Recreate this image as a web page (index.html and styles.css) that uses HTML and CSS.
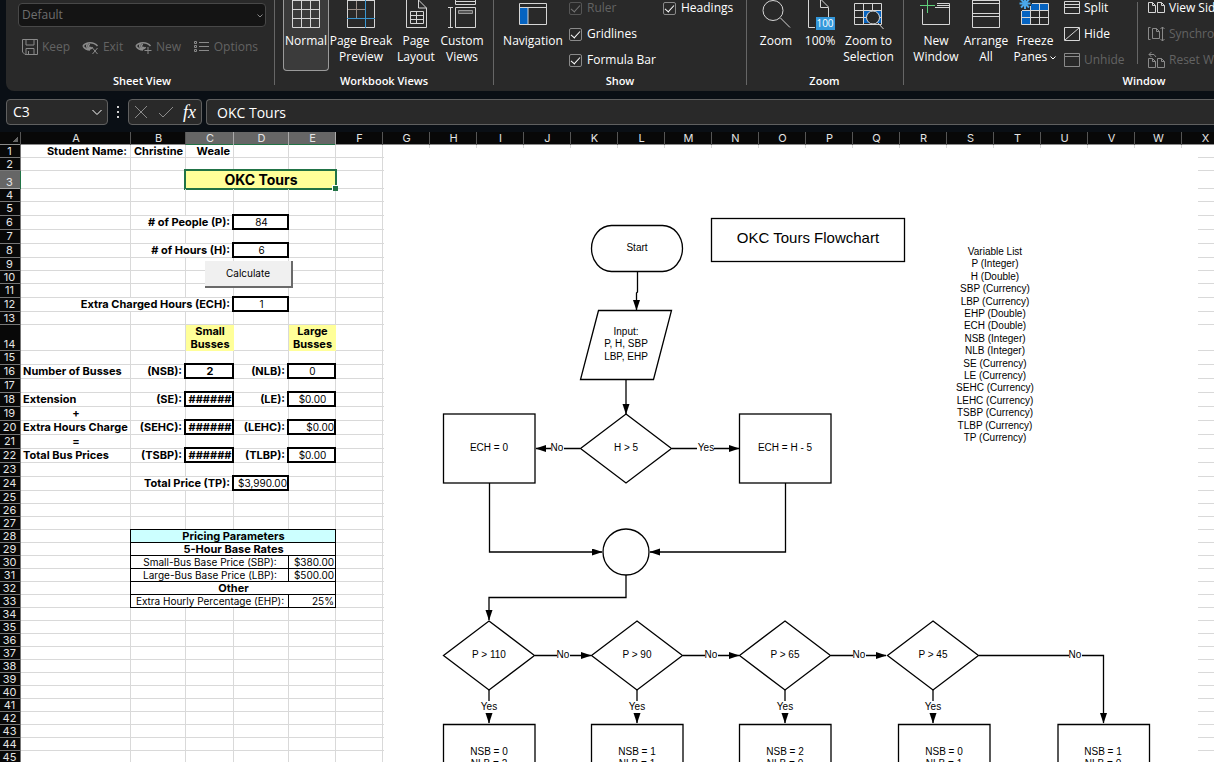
FILE: index.html
```html
<!DOCTYPE html>
<html lang="en">
<head>
<meta charset="utf-8">
<title>OKC Tours</title>
<link rel="stylesheet" href="styles.css">
</head>
<body>
<header class="ribbon">
  <section class="group group-sheet">
    <div class="sheet-tools">
      <select class="view-select" aria-label="Sheet view" disabled><option>Default</option></select>
      <svg class="select-caret" width="8" height="6" viewBox="0 0 8 6"><path d="M1.500 1.500L4 4l2.500-2.500"/></svg>
      <div class="tool-row">
        <button class="tool" disabled><svg width="16" height="16" viewBox="0 0 16 16"><path d="M.5.5h15v15H3L.5 13zM4 .5v5.500h8V.5M4 15.500V9.500h8v6M6.500 15v-3"/></svg>Keep</button>
        <button class="tool" disabled><svg width="17" height="16" viewBox="0 0 17 16"><path d="M1 7C4 2.500 12 2.500 15.500 7M1 7c2 3 4.500 4 7 4M6 4.500a3 3 0 1 0 4.500 3.500M8 5.500a1.500 1.500 0 1 0 1 2.500" stroke-width="1.500"/><path d="M10.500 9l5 6M15.500 9l-5 6"/></svg>Exit</button>
        <button class="tool" disabled><svg width="17" height="16" viewBox="0 0 17 16"><path d="M1 7C4 2.500 12 2.500 15.500 7M1 7c2 3 4.500 4 7 4M6 4.500a3 3 0 1 0 4.500 3.500M8 5.500a1.500 1.500 0 1 0 1 2.500" stroke-width="1.500"/><path d="M13 8v7M9.500 11.500h7"/></svg>New</button>
        <button class="tool" disabled><svg width="17" height="16" viewBox="0 0 17 16"><path d="M1.500 2.500h2v2h-2zM1.500 6.500h2v2h-2zM1.500 10.500h2v2h-2zM6 3.500h10M6 7.500h10M6 11.500h10"/></svg>Options</button>
      </div>
    </div>
    <h2>Sheet View</h2>
  </section>

  <section class="group group-views">
    <div class="bar">
      <button class="big w46 active"><svg width="28" height="28" viewBox="0 0 28 28"><path d="M.5-2v29.500h27V-2M9.500-2v29M18.500-2v29M.500 0.500h27M.5 9.500h27M.5 18.500h27"/></svg>Normal</button>
      <button class="big w64"><svg width="28" height="28" viewBox="0 0 28 28"><path d="M.5-2v29.500h27V-2M.5.5h27"/><path class="dim" d="M9.500 1v17M1 9.500h17"/><path class="blue" d="M18.500 0v28M0 18.500h28"/></svg>Page Break<br>Preview</button>
      <button class="big w46"><svg width="28" height="28" viewBox="0 0 28 28"><path d="M4.500-2v29.500h20V8L16.500 0M16.500-1v9h8M8.500 11.500h13v12h-13zM8.500 15.500h13M8.500 19.500h13M14.500 11.500v12"/></svg>Page<br>Layout</button>
      <button class="big w46"><svg width="28" height="28" viewBox="0 0 28 28"><path d="M7.500-1v5.500h20V-1M7.500 1.500h20M7.500 7.500h20v20h-20zM2.500 7v20M0 7.500h5M0 27.500h5"/><path class="slot" d="M10.500 10.500h14v3h-14z"/></svg>Custom<br>Views</button>
    </div>
    <h2>Workbook Views</h2>
  </section>

  <section class="group group-show">
    <div class="bar">
      <button class="big w62"><svg width="28" height="28" viewBox="0 0 28 28"><path class="fill" d="M1 8h8v16H1z"/><path d="M.5 3.500h27v21H.5zM.5 7.500h27M9 8v16"/></svg>Navigation</button>
      <div class="checks">
        <label class="off"><input type="checkbox" checked disabled>Ruler</label>
        <label><input type="checkbox" checked>Headings</label>
        <label><input type="checkbox" checked>Gridlines</label>
        <label class="wide"><input type="checkbox" checked>Formula Bar</label>
      </div>
    </div>
    <h2>Show</h2>
  </section>

  <section class="group group-zoom">
    <div class="bar">
      <button class="big w45"><svg width="30" height="28" viewBox="0 0 30 28"><circle cx="12" cy="10.500" r="10"/><path d="M19.500 18l9.500 9.500"/></svg>Zoom</button>
      <button class="big w45"><svg width="28" height="28" viewBox="0 0 28 28"><path d="M9 27.500H2.500V-2M14.500-2v9.500h8V17M14.500-1l8 8"/><path class="badge" d="M10 17h19v13H10z"/><text class="badge-text" x="19" y="27">100</text></svg>100%</button>
      <button class="big w54"><svg width="30" height="28" viewBox="0 0 30 28"><path class="fill" d="M10 11h17v12H10z"/><path d="M.5 3.500h27v21H.5zM9.500 4v20M18.500 4v20M1 10.500h27M1 17.500h27"/><circle class="lens" cx="19" cy="17.500" r="6.500"/><path d="M23.500 22.500l6 6.500"/></svg>Zoom to<br>Selection</button>
    </div>
    <h2>Zoom</h2>
  </section>

  <section class="group group-window">
    <div class="bar">
      <button class="big w50"><svg width="30" height="28" viewBox="0 0 30 28"><path d="M1.500 9v15.500h27v-21H16M14 7.500h14M16 5.500h12"/><path class="green" d="M6.500-2v15M-1 5.500h15"/></svg>New<br>Window</button>
      <button class="big w50"><svg width="28" height="28" viewBox="0 0 28 28"><path d="M.5-2v29.500h27V-2M.5.5h27M.5 3.500h27M.5 13.500h27M.5 16.500h27"/></svg>Arrange<br>All</button>
      <button class="big w48"><svg width="30" height="28" viewBox="0 0 30 28"><path class="fill" d="M11 4h17v6H11zM2 10h8v14H2z"/><path d="M1.500 11v13.500h27v-21H12M10.500 6v18M19.500 4v20M2 10.500h27M2 17.500h27"/><path class="sky" d="M5-2v11M-.5 3.500h11M1-.5l8 8M9-.5l-8 8"/></svg><span>Freeze<br>Panes <svg class="caret" width="6" height="4" viewBox="0 0 6 4"><path d="M.5.5L3 3 5.500.5"/></svg></span></button>
      <div class="small-list">
        <button class="tool lit"><svg width="16" height="16" viewBox="0 0 16 16"><path d="M.5 1.500h15v12H.5zM.5 4.500h15M.5 7.500h15"/></svg>Split</button>
        <button class="tool lit"><svg width="16" height="16" viewBox="0 0 16 16"><path d="M.5 1.500h15v13H.5zM1 14L15 2"/></svg>Hide</button>
        <button class="tool" disabled><svg width="16" height="16" viewBox="0 0 16 16"><path d="M.5 1.500h15v13H.5zM.5 4.500h15"/></svg>Unhide</button>
      </div>
      <div class="small-list side-list">
        <button class="tool lit"><svg width="17" height="16" viewBox="0 0 17 16"><path d="M.5 2.500h4l3 3v7h-7zM4.500 2.500v3h3M9.500 2.500h4l3 3v7h-7zM13.500 2.500v3h3"/></svg>View Side by Side</button>
        <button class="tool" disabled><svg width="17" height="16" viewBox="0 0 17 16"><path d="M2.500 1.500h-2v12h2M4.500 2.500h4l3 3v7h-7zM8.500 2.500v3h3M14.500 1v14M12.500 3l2-2 2 2M12.500 13l2 2 2-2"/></svg>Synchronous Scrolling</button>
        <button class="tool" disabled><svg width="17" height="16" viewBox="0 0 17 16"><path d="M.5 6.500h4l3 3v6h-7zM4.500 6.500v3h3M9.500 6.500h4l3 3v6h-7zM13.500 6.500v3h3M1 2.500h5l2 2.500M3.500 0L1 2.500 3.500 5"/></svg>Reset Window Position</button>
      </div>
    </div>
    <h2>Window</h2>
  </section>
</header>

<div class="formula-bar">
  <div class="name-box">
    <input type="text" aria-label="Name box" value="C3">
    <button aria-label="Open name list"><svg width="12" height="12" viewBox="0 0 12 12"><path d="M1.500 4L6 8.500 10.500 4"/></svg></button>
  </div>
  <div class="grip"><span></span><span></span><span></span></div>
  <div class="entry">
    <button aria-label="Cancel"><svg width="14" height="14" viewBox="0 0 14 14"><path d="M1 1l12 12M13 1L1 13"/></svg></button>
    <button aria-label="Enter"><svg width="16" height="14" viewBox="0 0 16 14"><path d="M1 8l4 4L15 2"/></svg></button>
    <button class="fx" aria-label="Insert function">fx</button>
  </div>
  <input class="formula" type="text" aria-label="Formula" value="OKC Tours">
</div>

<main class="sheet">
  <table class="grid">
    <colgroup id="cols"></colgroup>
    <thead><tr id="letters"></tr></thead>
    <tbody id="rows"></tbody>
  </table>
  <button class="calc">Calculate</button>
  <svg class="chart" width="814" height="640" viewBox="384 148 814 640">
    <defs>
      <marker id="tip" markerUnits="userSpaceOnUse" markerWidth="11" markerHeight="8" refX="10" refY="3.500" orient="auto"><path class="tip" d="M0 0L10.500 3.500 0 7z"/></marker>
    </defs>
    <g class="shape">
      <rect x="591.500" y="225.500" width="91" height="46" rx="20" ry="23"/>
      <rect x="711.500" y="218.500" width="193" height="43"/>
      <path d="M598.500 310.500h73l-18 69h-73z"/>
      <path d="M626 414l45.500 34.500L626 483l-45.500-34.500z"/>
      <rect x="443.500" y="414" width="91.500" height="69"/>
      <rect x="739.500" y="414" width="91.500" height="69"/>
      <circle cx="626" cy="552" r="23"/>
      <path d="M489 621l45.500 34.500L489 690l-45.500-34.500zM637 621l45.500 34.500L637 690l-45.500-34.500zM785 621l45.500 34.500L785 690l-45.500-34.500zM933 621l45.500 34.500L933 690l-45.500-34.500z"/>
      <path d="M443.500 764v-39.500H535V764M591.500 764v-39.500H683V764M739.500 764v-39.500H831V764M898.500 764v-39.500H990V764M1058 764v-39.500h91.500V764"/>
    </g>
    <g class="link">
      <path d="M637.500 272v20l-1 1v17"/>
      <path d="M626 380v34"/>
      <path d="M580 448.500h-44"/>
      <path d="M672 448.500h67"/>
      <path d="M489.500 483v69H602"/>
      <path d="M785.500 483v69H650"/>
      <path d="M626 575v22.500H489V620"/>
      <path d="M535 655.500h56"/>
      <path d="M683 655.500h56"/>
      <path d="M831 655.500h55"/>
      <path d="M979 655.500h124.500V723"/>
      <path d="M489 690v33"/>
      <path d="M637 690v33"/>
      <path d="M785 690v33"/>
      <path d="M933 690v33"/>
    </g>
    <g class="gap">
      <rect x="551" y="444" width="13" height="9"/><rect x="697" y="444" width="17" height="9"/>
      <rect x="557" y="651" width="13" height="9"/><rect x="705" y="651" width="13" height="9"/>
      <rect x="853" y="651" width="13" height="9"/><rect x="1069" y="651" width="13" height="9"/>
      <rect x="481" y="701" width="17" height="12"/><rect x="629" y="701" width="17" height="12"/>
      <rect x="777" y="701" width="17" height="12"/><rect x="925" y="701" width="17" height="12"/>
    </g>
    <g class="words">
      <text class="title" x="808" y="243">OKC Tours Flowchart</text>
      <text x="637" y="251">Start</text>
      <text x="626" y="335">Input:</text><text x="626" y="347">P, H, SBP</text><text x="626" y="360">LBP, EHP</text>
      <text x="626" y="451">H &gt; 5</text>
      <text x="489" y="451">ECH = 0</text><text x="785" y="451">ECH = H - 5</text>
      <text x="557" y="451">No</text><text x="706" y="451">Yes</text>
      <text x="489" y="658">P &gt; 110</text><text x="637" y="658">P &gt; 90</text><text x="785" y="658">P &gt; 65</text><text x="933" y="658">P &gt; 45</text>
      <text x="563" y="658">No</text><text x="711" y="658">No</text><text x="859" y="658">No</text><text x="1075" y="658">No</text>
      <text x="489" y="710">Yes</text><text x="637" y="710">Yes</text><text x="785" y="710">Yes</text><text x="933" y="710">Yes</text>
      <text x="489" y="755">NSB = 0</text><text x="637" y="755">NSB = 1</text><text x="785" y="755">NSB = 2</text><text x="944" y="755">NSB = 0</text><text x="1103" y="755">NSB = 1</text>
      <text x="489" y="767">NLB = 2</text><text x="637" y="767">NLB = 1</text><text x="785" y="767">NLB = 0</text><text x="944" y="767">NLB = 1</text><text x="1103" y="767">NLB = 0</text>
      <text x="995" y="255">Variable List</text>
      <text x="995" y="267">P (Integer)</text>
      <text x="995" y="280">H (Double)</text>
      <text x="995" y="292">SBP (Currency)</text>
      <text x="995" y="305">LBP (Currency)</text>
      <text x="995" y="317">EHP (Double)</text>
      <text x="995" y="329">ECH (Double)</text>
      <text x="995" y="342">NSB (Integer)</text>
      <text x="995" y="354">NLB (Integer)</text>
      <text x="995" y="367">SE (Currency)</text>
      <text x="995" y="379">LE (Currency)</text>
      <text x="995" y="391">SEHC (Currency)</text>
      <text x="995" y="404">LEHC (Currency)</text>
      <text x="995" y="416">TSBP (Currency)</text>
      <text x="995" y="429">TLBP (Currency)</text>
      <text x="995" y="441">TP (Currency)</text>
    </g>
  </svg>
</main>
<script src="sheet.js"></script>
</body>
</html>
```

FILE: styles.css
```css
* { box-sizing: border-box; }

body {
  margin: 0;
  height: 100vh;
  display: flex;
  flex-direction: column;
  overflow: hidden;
  background: #0a0f15;
  color: #fff;
  font: 12px/16px "Open Sans", "Noto Sans", sans-serif;
}

button, input, select { font: inherit; color: inherit; }
button { margin: 0; padding: 0; border: 0; background: none; white-space: nowrap; }
svg { fill: none; stroke: #d6d6d6; flex: none; }

/* Ribbon */
.ribbon {
  display: flex;
  flex: none;
  margin-left: 6px;
  height: 91px;
  overflow: hidden;
  background: #292929;
  border-bottom-left-radius: 8px;
}
.group {
  flex: none;
  display: flex;
  flex-direction: column;
  justify-content: space-between;
  padding: 0 8px 2px;
  position: relative;
}
.group + .group::before {
  content: "";
  position: absolute;
  left: 0;
  top: 0;
  bottom: 6px;
  width: 1px;
  background: #666;
}
.group h2 { margin: 0; font-size: 11px; font-weight: 600; text-align: center; }
.group-sheet { width: 268px; padding-left: 12px; }
.group-views { width: 219px; padding-left: 9px; }
.group-show { width: 253px; padding-left: 9px; }
.group-zoom { width: 157px; }
.group-window { width: 482px; }

.sheet-tools { padding-top: 3px; }
.view-select {
  appearance: none;
  display: block;
  width: 248px;
  height: 24px;
  padding: 0 3px;
  border: 1px solid #484848;
  border-radius: 4px;
  background: #141414;
  color: #6e6e6e;
  opacity: 1;
}
.select-caret { position: absolute; left: 250px; top: 13px; stroke: #888; }
.tool-row { display: flex; justify-content: space-between; padding: 12px 8px 0 4px; }
.tool { display: flex; align-items: center; gap: 4px; height: 16px; color: #636363; line-height: 14px; }
.tool svg { stroke: #8a8a8a; }
.tool.lit { color: #fff; }
.tool.lit svg { stroke: #d6d6d6; }

.bar { display: flex; align-items: flex-start; }
.big {
  display: flex;
  flex-direction: column;
  align-items: center;
  justify-content: flex-start;
  height: 71px;
  text-align: center;
}
.big > svg { margin-bottom: 5px; overflow: visible; }
.w45 { width: 45px; }
.w46 { width: 46px; }
.w48 { width: 48px; }
.w50 { width: 50px; }
.w54 { width: 54px; }
.w62 { width: 62px; }
.w64 { width: 64px; }
.active {
  border: 1px solid #9a9a9a;
  border-top: 0;
  border-radius: 0 0 4px 4px;
  background: #3b3b3b;
}
.dim { stroke: #9b8f88; }
.blue { stroke: #3a96d0; }
.green { stroke: #5fd07a; }
.sky { stroke: #4aa8e8; stroke-width: 2; }
.fill { fill: #0563c1; stroke: none; }
.slot { fill: #555; stroke: #999; }
.lens { fill: #292929; }
.badge { fill: #3498db; stroke: none; }
.badge-text { fill: #fff; stroke: none; font-size: 10px; text-anchor: middle; }
.caret { stroke: #fff; vertical-align: middle; }

.checks {
  display: grid;
  grid-template-columns: 94px auto;
  grid-auto-rows: 26px;
  margin: -5px 0 0 5px;
  line-height: 14px;
}
.checks label { display: flex; align-items: center; gap: 5px; white-space: nowrap; }
.checks .wide { grid-column: 1 / 3; }
.checks .off { color: #636363; }
.checks input {
  appearance: none;
  flex: none;
  width: 13px;
  height: 13px;
  margin: 0;
  border: 1px solid #8a8a8a;
  border-radius: 2px;
  display: grid;
  place-items: center;
}
.checks input::after {
  content: "";
  width: 4px;
  height: 8px;
  margin-top: -2px;
  border: solid #fff;
  border-width: 0 1px 1px 0;
  transform: rotate(42deg);
}
.checks .off input { border-color: #555; }
.checks .off input::after { border-color: #777; }

.small-list { display: grid; grid-auto-rows: 26px; margin: -5px 0 0 5px; align-items: center; width: 74px; }
.side-list { position: relative; margin-left: 10px; width: auto; }
.side-list::before {
  content: "";
  position: absolute;
  left: -11px;
  top: 7px;
  height: 62px;
  width: 1px;
  background: #666;
}

/* Formula bar */
.formula-bar {
  flex: none;
  display: flex;
  padding: 8px 0 7px 6px;
  height: 41px;
  font-size: 14px;
}
.name-box, .entry, .formula {
  height: 26px;
  border: 1px solid #606060;
  border-radius: 4px;
  background: #292929;
}
.name-box { display: flex; width: 102px; padding: 0 4px 0 6px; }
.name-box input { width: 78px; padding: 0; border: 0; background: none; }
.name-box svg { stroke: #fff; display: block; }
.grip { width: 20px; display: flex; flex-direction: column; align-items: center; justify-content: center; gap: 3px; }
.grip span { width: 2px; height: 2px; background: #d0d0d0; }
.entry { display: flex; align-items: center; justify-content: space-between; width: 74px; padding: 0 5px 0 5px; }
.entry svg { display: block; stroke: #8a8a8a; }
.fx { font: italic 18px/22px "Liberation Serif", serif; }
.formula { flex: 1; min-width: 0; margin-left: 4px; padding: 0 10px; border-right: 0; border-radius: 4px 0 0 4px; }

/* Worksheet */
.sheet {
  flex: 1;
  min-height: 0;
  position: relative;
  overflow: hidden;
  background: #fff;
  color: #000;
  font: 11px/13px Inter, sans-serif;
}
.grid { table-layout: fixed; width: 0; border-collapse: separate; border-spacing: 0; }
.grid td, .grid th { padding: 0; font-weight: 400; white-space: nowrap; overflow: visible; }
.grid td { position: relative; padding: 0 2px; vertical-align: top; font-size: 10px; box-shadow: inset -1px -1px #d9d9d9; }
.grid th { height: 13px; background: #080808; color: #e4e4e4; vertical-align: bottom; }
.grid thead th { box-shadow: inset -1px 0 #555, inset 0 -1px #8a8a8a; }
.grid tbody th { padding-right: 2px; box-shadow: inset 0 -1px #777, inset -1px 0 #777; }
.grid .h14 th { vertical-align: top; }
.grid thead .on { background: #666; box-shadow: inset -1px 0 #aaa, inset 0 -1px #217346; }
.grid tbody .on { background: #666; box-shadow: inset -1px 0 #217346, inset 0 -1px #aaa; }
.corner::after {
  content: "";
  display: block;
  margin: 0 3px 3px auto;
  width: 5px;
  height: 5px;
  background: linear-gradient(135deg, transparent 50%, #666 50%);
}
.h14 { height: 14px; }
.h13 { height: 13px; }
.h18 { height: 18px; }
.h26 { height: 26px; }

.grid .b { font-weight: 700; font-size: 11px; }
.grid .l { text-align: left; }
.grid .c { text-align: center; }
.grid .r { text-align: right; }
.grid .pad { padding-right: 4px; }
.grid .yellow { background: #ffff99; box-shadow: none; }
.grid .cyan { background: #ccffff; }
.grid .title { font-size: 14px; line-height: 17px; }
.box::after, .thin::after, .pick::after {
  content: "";
  position: absolute;
  inset: -2px 0 0 -2px;
  border: 2px solid #000;
  pointer-events: none;
}
.thin::after { inset: -1px 0 0 -1px; border-width: 1px; }
.pick::after { inset: -2px -1px -1px -2px; border-color: #217346; }
.pick::before {
  content: "";
  position: absolute;
  z-index: 1;
  right: -2px;
  bottom: -2px;
  width: 5px;
  height: 5px;
  background: #217346;
  border: solid #fff;
  border-width: 1px 0 0 1px;
}

.calc {
  position: absolute;
  left: 205px;
  top: 129px;
  width: 88px;
  height: 27px;
  border: solid #6a6a6a;
  border-width: 0 2px 2px 0;
  background: #f0f0f0;
  font-size: 10px;
}

/* Flowchart */
.chart { position: absolute; left: 384px; top: 16px; background: #fff; }
.shape, .link { stroke: #000; stroke-width: 1.3; }
.link path { marker-end: url(#tip); }
.tip { fill: #000; stroke: none; }
.gap { fill: #fff; stroke: none; }
.words { fill: #000; stroke: none; text-anchor: middle; font: 10px "Liberation Sans", Arial, sans-serif; }
.words .title { font-size: 15px; }
```

FILE: sheet.js
```js
const widths = [110, 55, 48, 55, 47];
const HEAD_WIDTH = 21;
const HEAD_HEIGHT = 13;

// row -> { column: [text, classes, colspan] }
const data = {
  1: { 0: ["Student Name:", "b r pad"], 1: ["Christine", "b c"], 2: ["Weale", "b r pad"] },
  3: { 2: ["OKC Tours", "b c title yellow pick", 3] },
  6: { 1: ["# of People (P):", "b r pad", 2], 3: ["84", "c box"] },
  8: { 1: ["# of Hours (H):", "b r pad", 2], 3: ["6", "c box"] },
  12: { 0: ["Extra Charged Hours (ECH):", "b r pad", 3], 3: ["1", "c box"] },
  14: { 2: ["Small\nBusses", "b c yellow"], 4: ["Large\nBusses", "b c yellow"] },
  16: { 0: ["Number of Busses", "b l"], 1: ["(NSB):", "b r pad"], 2: ["2", "b c box"], 3: ["(NLB):", "b r pad"], 4: ["0", "c box"] },
  18: { 0: ["Extension", "b l"], 1: ["(SE):", "b r pad"], 2: ["######", "b c box"], 3: ["(LE):", "b r pad"], 4: ["$0.00", "c box"] },
  19: { 0: ["+", "b c"] },
  20: { 0: ["Extra Hours Charge", "b l"], 1: ["(SEHC):", "b r pad"], 2: ["######", "b c box"], 3: ["(LEHC):", "b r pad"], 4: ["$0.00", "r box"] },
  21: { 0: ["=", "b c"] },
  22: { 0: ["Total Bus Prices", "b l"], 1: ["(TSBP):", "b r pad"], 2: ["######", "b c box"], 3: ["(TLBP):", "b r pad"], 4: ["$0.00", "c box"] },
  24: { 1: ["Total Price (TP):", "b r pad", 2], 3: ["$3,990.00", "r box"] },
  28: { 1: ["Pricing Parameters", "b c thin cyan", 4] },
  29: { 1: ["5-Hour Base Rates", "b c thin", 4] },
  30: { 1: ["Small-Bus Base Price (SBP):", "c thin", 3], 4: ["$380.00", "r thin"] },
  31: { 1: ["Large-Bus Base Price (LBP):", "c thin", 3], 4: ["$500.00", "r thin"] },
  32: { 1: ["Other", "b c thin", 4] },
  33: { 1: ["Extra Hourly Percentage (EHP):", "c thin", 3], 4: ["25%", "r thin"] }
};

function rowHeight(n) {
  if (n === 3) return 18;
  if (n === 14) return 26;
  if ((n >= 5 && n <= 8) || n === 11 || n === 12 || (n >= 15 && n <= 24)) return 14;
  return 13;
}

function letter(i) {
  return i < 26 ? String.fromCharCode(65 + i) : letter(Math.floor(i / 26) - 1) + letter(i % 26);
}

// Fills the visible area with as many columns and rows as it holds.
function render() {
  const sheet = document.querySelector(".sheet");
  let cols = `<col style="width:${HEAD_WIDTH}px">`;
  let heads = '<th class="corner"></th>';
  let count = 0;
  for (let x = HEAD_WIDTH; x < sheet.clientWidth; count++) {
    const w = widths[count] || 47;
    cols += `<col style="width:${w}px">`;
    heads += `<th scope="col"${count > 1 && count < 5 ? ' class="on"' : ""}>${letter(count)}</th>`;
    x += w;
  }
  document.getElementById("cols").innerHTML = cols;
  document.getElementById("letters").innerHTML = heads;

  let body = "";
  for (let n = 1, y = HEAD_HEIGHT; y < sheet.clientHeight; y += rowHeight(n), n++) {
    const row = data[n] || {};
    body += `<tr class="h${rowHeight(n)}"><th scope="row"${n === 3 ? ' class="on"' : ""}>${n}</th>`;
    for (let c = 0; c < count; c++) {
      if (row[c]) {
        const [text, cls, span = 1] = row[c];
        body += `<td class="${cls}" colspan="${span}">${text.replace("\n", "<br>")}</td>`;
        c += span - 1;
      } else {
        body += "<td></td>";
      }
    }
    body += "</tr>";
  }
  document.getElementById("rows").innerHTML = body;
}

render();
window.addEventListener("resize", render);
```
